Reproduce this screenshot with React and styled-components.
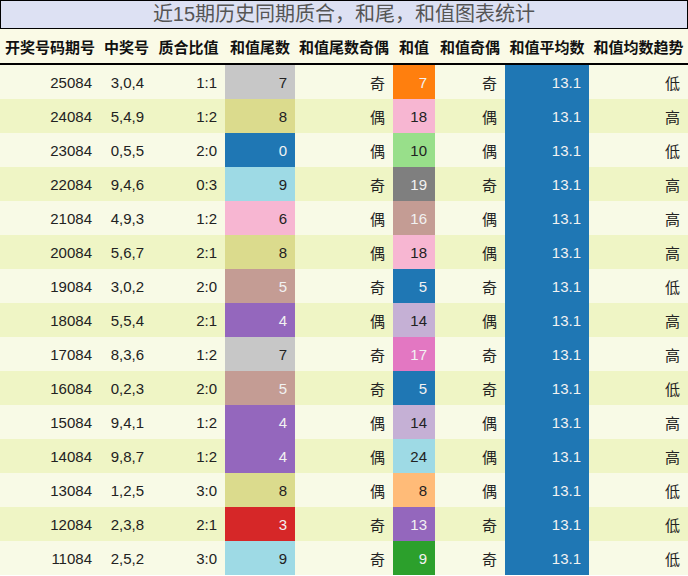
import React from 'react';
import styled, { createGlobalStyle } from 'styled-components';

const Global = createGlobalStyle`
  body { margin: 0; background: #fff; font-family: "Liberation Sans", "Noto Sans CJK SC", sans-serif; }
`;

const DARK = ['#1f77b4', '#ff7f0e', '#7f7f7f', '#c49c94', '#9467bd', '#e377c2', '#d62728', '#2ca02c'];

const rows = [
  ['25084', '3,0,4', '1:1', 7, '#c7c7c7', '奇', 7, '#ff7f0e', '奇', '低'],
  ['24084', '5,4,9', '1:2', 8, '#dbdb8d', '偶', 18, '#f7b6d2', '偶', '高'],
  ['23084', '0,5,5', '2:0', 0, '#1f77b4', '偶', 10, '#98df8a', '偶', '低'],
  ['22084', '9,4,6', '0:3', 9, '#9edae5', '奇', 19, '#7f7f7f', '奇', '高'],
  ['21084', '4,9,3', '1:2', 6, '#f7b6d2', '偶', 16, '#c49c94', '偶', '高'],
  ['20084', '5,6,7', '2:1', 8, '#dbdb8d', '偶', 18, '#f7b6d2', '偶', '高'],
  ['19084', '3,0,2', '2:0', 5, '#c49c94', '奇', 5, '#1f77b4', '奇', '低'],
  ['18084', '5,5,4', '2:1', 4, '#9467bd', '偶', 14, '#c5b0d5', '偶', '高'],
  ['17084', '8,3,6', '1:2', 7, '#c7c7c7', '奇', 17, '#e377c2', '奇', '高'],
  ['16084', '0,2,3', '2:0', 5, '#c49c94', '奇', 5, '#1f77b4', '奇', '低'],
  ['15084', '9,4,1', '1:2', 4, '#9467bd', '偶', 14, '#c5b0d5', '偶', '高'],
  ['14084', '9,8,7', '1:2', 4, '#9467bd', '偶', 24, '#9edae5', '偶', '高'],
  ['13084', '1,2,5', '3:0', 8, '#dbdb8d', '偶', 8, '#ffbb78', '偶', '低'],
  ['12084', '2,3,8', '2:1', 3, '#d62728', '奇', 13, '#9467bd', '奇', '低'],
  ['11084', '2,5,2', '3:0', 9, '#9edae5', '奇', 9, '#2ca02c', '奇', '低'],
];

const heads = ['开奖号码期号', '中奖号', '质合比值', '和值尾数', '和值尾数奇偶', '和值', '和值奇偶', '和值平均数', '和值均数趋势'];
const widths = [100, 52, 73, 70, 98, 42, 70, 84, 99];

const Title = styled.div`
  height: 27px;
  border: 1px solid #000;
  background: #dde1f3;
  color: #555;
  font-size: 20px;
  line-height: 27px;
  text-align: center;
`;

const Table = styled.table`
  border-collapse: collapse;
  table-layout: fixed;
  width: 688px;
`;

const Th = styled.th`
  height: 34px;
  padding: 0 4px;
  background: #fafae6;
  border-bottom: 2px solid #000;
  font-size: 15px;
  font-weight: bold;
  color: #111;
  text-align: center;
  white-space: nowrap;
`;

const Td = styled.td`
  height: 34px;
  padding: 0 8px 0 0;
  text-align: right;
  font-size: 15px;
  color: ${p => (p.$bg && DARK.includes(p.$bg) ? '#f2f2f2' : '#222')};
  background: ${p => p.$bg || 'transparent'};
`;

const Tr = styled.tr`
  background: ${p => (p.$alt ? '#eff5c5' : '#f8fae6')};
`;

export default function App() {
  return (
    <>
      <Global />
      <Title>近15期历史同期质合，和尾，和值图表统计</Title>
      <Table>
        <colgroup>
          {widths.map((w, i) => <col key={i} style={{ width: w }} />)}
        </colgroup>
        <thead>
          <tr>{heads.map(h => <Th key={h}>{h}</Th>)}</tr>
        </thead>
        <tbody>
          {rows.map((r, i) => (
            <Tr key={r[0]} $alt={i % 2 === 1}>
              <Td>{r[0]}</Td>
              <Td>{r[1]}</Td>
              <Td>{r[2]}</Td>
              <Td $bg={r[4]}>{r[3]}</Td>
              <Td>{r[5]}</Td>
              <Td $bg={r[7]}>{r[6]}</Td>
              <Td>{r[8]}</Td>
              <Td $bg="#1f77b4">13.1</Td>
              <Td>{r[9]}</Td>
            </Tr>
          ))}
        </tbody>
      </Table>
    </>
  );
}
